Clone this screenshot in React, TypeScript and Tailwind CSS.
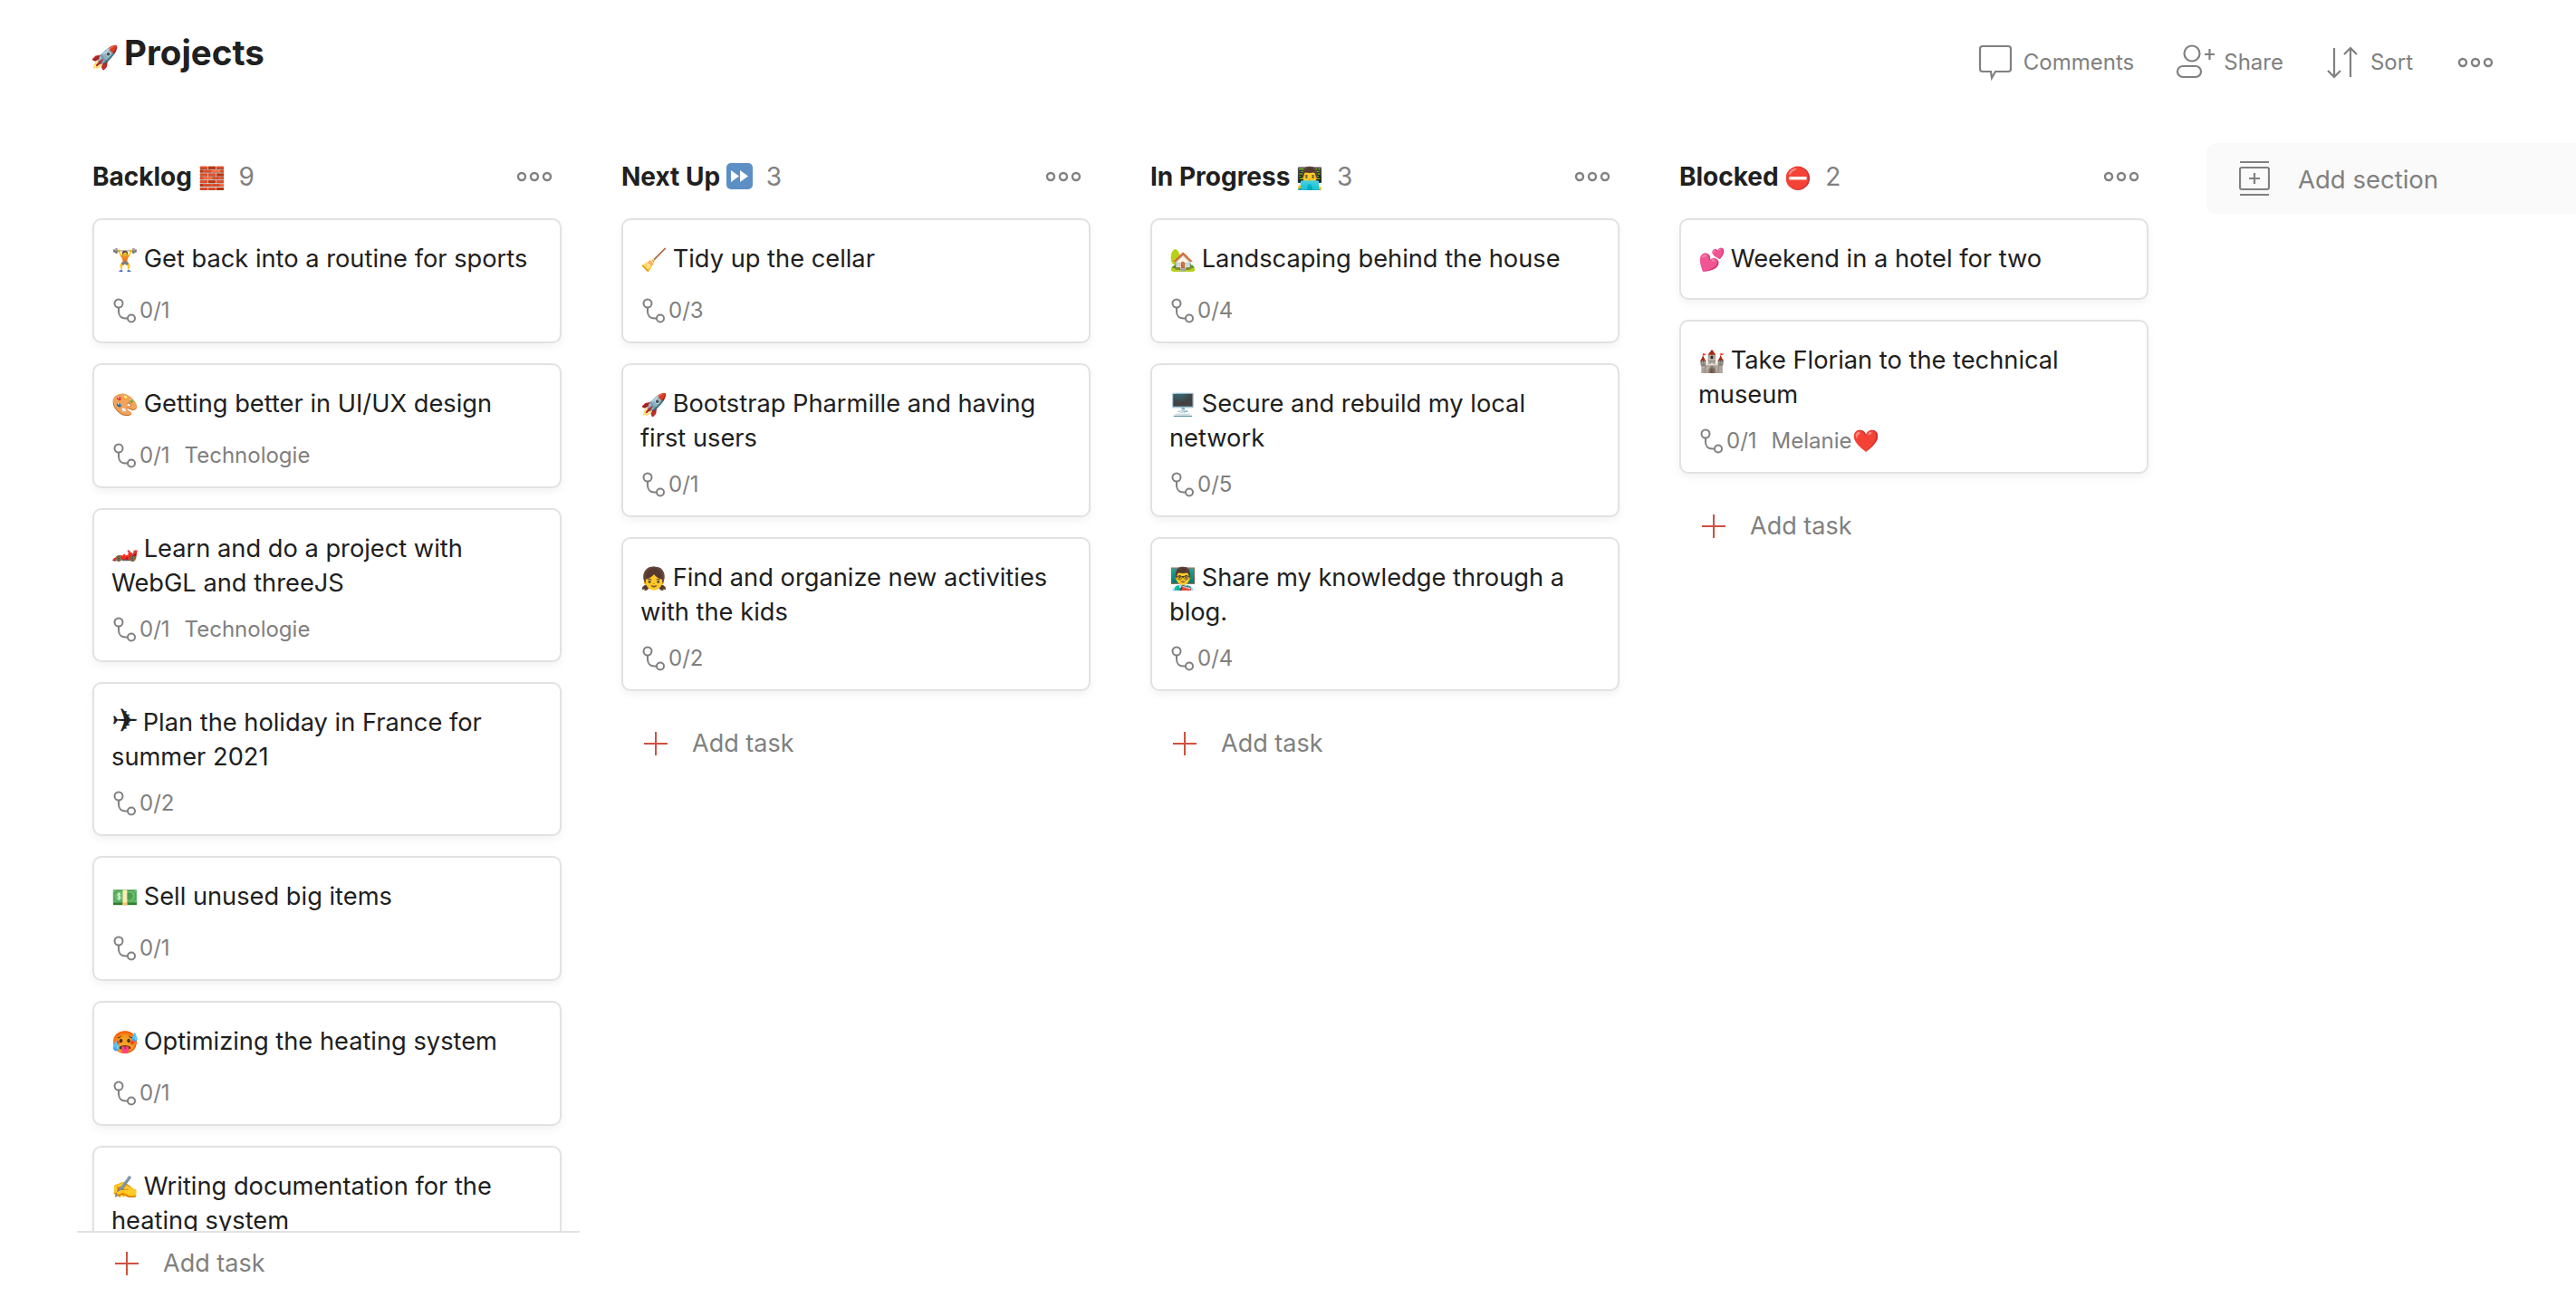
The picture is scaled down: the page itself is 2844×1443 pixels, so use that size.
import React from "react";

const Dots = () => (
  <svg width="40" height="14" viewBox="0 0 40 14" fill="none" stroke="#808080" strokeWidth="2.4">
    <circle cx="6" cy="7" r="4" /><circle cx="20" cy="7" r="4" /><circle cx="34" cy="7" r="4" />
  </svg>
);

const Sub = () => (
  <svg width="28" height="28" viewBox="0 0 28 28" fill="none" stroke="#808080" strokeWidth="2">
    <circle cx="8" cy="6" r="4.5" />
    <path d="M8 10.5 V15 C8 19.5 11 22.5 15.500 22.500 H18" />
    <circle cx="22" cy="22.500" r="4" />
  </svg>
);

const Plus = () => (
  <svg width="28" height="28" viewBox="0 0 28 28" fill="none" stroke="#cf5140" strokeWidth="2">
    <path d="M14 1 V27 M1 14 H27" />
  </svg>
);

const FastForward = () => (
  <svg className="inline-block align-[-4px]" width="29" height="29" viewBox="0 0 29 29">
    <rect width="29" height="29" rx="5" fill="#5c8fc4" />
    <path d="M5 8 L14 14.500 L5 21 Z M15 8 L24 14.500 L15 21 Z" fill="#fff" />
  </svg>
);

const AddTask = () => (
  <div className="flex items-center h-[40px]">
    <span className="ml-[24px] flex"><Plus /></span>
    <span className="ml-[26px] text-[27px] text-[#808080]">Add task</span>
  </div>
);

type Task = { e: string; t: string; m?: string; l?: string };

const TaskCard = ({ e, t, m, l }: Task) => (
  <div className="rounded-[10px] border-2 border-[#e2e2e2] bg-white pt-6 pb-[18px] px-[19px] shadow-[0_4px_10px_rgba(0,0,0,0.05)] shrink-0">
    <div className="min-h-[44px] text-[27.25px] leading-[38px] text-[#202020]">
      <span className={e === "✈" ? "inline-block h-[20px] leading-[20px] align-[-1px] text-[36px] mr-[-3px]" : "text-[24px] leading-none mr-[-2px]"}>{e}</span> {t}
    </div>
    {m && (
      <div className="mt-[14px] -mb-[2px] h-9 flex items-center text-[24px] text-[#808080]">
        <Sub />
        <span className="ml-[3px]">{m}</span>
        {l && <span className="ml-4">{l}</span>}
      </div>
    )}
  </div>
);

type Col = { name: string; emoji: React.ReactNode; count: number; tasks: Task[]; clip?: boolean };

const Column = ({ name, emoji, count, tasks, clip }: Col) => (
  <div className={`w-[555px] shrink-0 flex flex-col ${clip ? "h-full" : ""}`}>
    <div className="h-[83px] pt-[19px] pl-[17px] pr-[20px] shrink-0">
      <div className="h-[36px] flex items-center w-full">
        <span className="shrink-0 whitespace-nowrap text-[28px] font-bold text-[#202020]">{name} <span className="text-[24px] leading-none">{emoji}</span></span>
        <span className="ml-[15px] text-[28px] text-[#808080]">{count}</span>
        <span className="ml-auto mr-[10px] flex"><Dots /></span>
      </div>
    </div>
    <div className={`flex flex-col gap-[22px] pl-[17px] pr-[20px] ${clip ? "flex-1 min-h-0 overflow-hidden" : ""}`}>
      {tasks.map((x) => <TaskCard key={x.t} {...x} />)}
    </div>
    {clip ? (
      <div className="h-[84px] shrink-0 border-t-2 border-[#e2e2e2] pt-[14px] pl-[17px]"><AddTask /></div>
    ) : (
      <div className="mt-[38px] pl-[17px]"><AddTask /></div>
    )}
  </div>
);

const cols: Col[] = [
  { name: "Backlog", emoji: "🧱", count: 9, clip: true, tasks: [
    { e: "🏋️", t: "Get back into a routine for sports", m: "0/1" },
    { e: "🎨", t: "Getting better in UI/UX design", m: "0/1", l: "Technologie" },
    { e: "🏎️", t: "Learn and do a project with WebGL and threeJS", m: "0/1", l: "Technologie" },
    { e: "✈", t: "Plan the holiday in France for summer 2021", m: "0/2" },
    { e: "💵", t: "Sell unused big items", m: "0/1" },
    { e: "🥵", t: "Optimizing the heating system", m: "0/1" },
    { e: "✍️", t: "Writing documentation for the heating system", m: "0/1" },
  ] },
  { name: "Next Up", emoji: <FastForward />, count: 3, tasks: [
    { e: "🧹", t: "Tidy up the cellar", m: "0/3" },
    { e: "🚀", t: "Bootstrap Pharmille and having first users", m: "0/1" },
    { e: "👧", t: "Find and organize new activities with the kids", m: "0/2" },
  ] },
  { name: "In Progress", emoji: "👨‍💻", count: 3, tasks: [
    { e: "🏡", t: "Landscaping behind the house", m: "0/4" },
    { e: "🖥️", t: "Secure and rebuild my local network", m: "0/5" },
    { e: "👨‍🏫", t: "Share my knowledge through a blog.", m: "0/4" },
  ] },
  { name: "Blocked", emoji: "⛔", count: 2, tasks: [
    { e: "💕", t: "Weekend in a hotel for two" },
    { e: "🏰", t: "Take Florian to the technical museum", m: "0/1", l: "Melanie❤️" },
  ] },
];

export default function App() {
  return (
    <div className="h-[1443px] w-full overflow-hidden bg-white flex flex-col font-['Inter',sans-serif]">
      <header className="h-[158px] shrink-0 flex items-start pl-[100px] pr-[91px]">
        <h1 className="mt-[32px] text-[38.500px] leading-[52px] font-bold text-[#202020]"><span className="text-[25px] leading-none mr-[-3px]">🚀</span> Projects</h1>
        <div className="ml-auto mt-[48px] flex items-center h-[42px] text-[24px] text-[#808080]">
          <svg width="40" height="40" viewBox="0 0 40 40" fill="none" stroke="#808080" strokeWidth="2.2"><path d="M5 2 H33 a3 3 0 0 1 3 3 V27 a3 3 0 0 1 -3 3 H19 L15 37 L14 30 H5 a3 3 0 0 1 -3 -3 V5 a3 3 0 0 1 3 -3 Z" /></svg>
          <span className="ml-[10px]">Comments</span>
          <svg className="ml-[46px]" width="44" height="40" viewBox="0 0 44 40" fill="none" stroke="#808080" strokeWidth="2.2"><circle cx="18" cy="10" r="8.500" /><rect x="2" y="24" width="26" height="12" rx="6" /><path d="M32 11 H43 M37.500 5 V17" /></svg>
          <span className="ml-[9px]">Share</span>
          <svg className="ml-[47px]" width="36" height="40" viewBox="0 0 36 40" fill="none" stroke="#808080" strokeWidth="2.200"><path d="M9 4 V36 M2 29 L9 36 L16 29 M27 36 V4 M20 11 L27 4 L34 11" /></svg>
          <span className="ml-[13px]">Sort</span>
          <span className="ml-[49px] flex"><Dots /></span>
        </div>
      </header>
      <main className="flex-1 min-h-0 flex items-start pl-[85px] gap-[29px] overflow-hidden">
        {cols.map((c) => <Column key={c.name} {...c} />)}
        <div className="ml-[15px] w-[500px] shrink-0 h-[78px] rounded-l-[10px] bg-[#fafafa] flex items-center pl-[36px]">
          <svg width="34" height="40" viewBox="0 0 34 40" fill="none" stroke="#808080" strokeWidth="2.200">
            <path d="M1 2 H33 M1 38 H33" />
            <rect x="1" y="8" width="32" height="24" rx="2" />
            <path d="M17 14 V26 M11 20 H23" />
          </svg>
          <span className="ml-[31px] pt-[4px] text-[27.500px] text-[#808080]">Add section</span>
        </div>
      </main>
    </div>
  );
}
